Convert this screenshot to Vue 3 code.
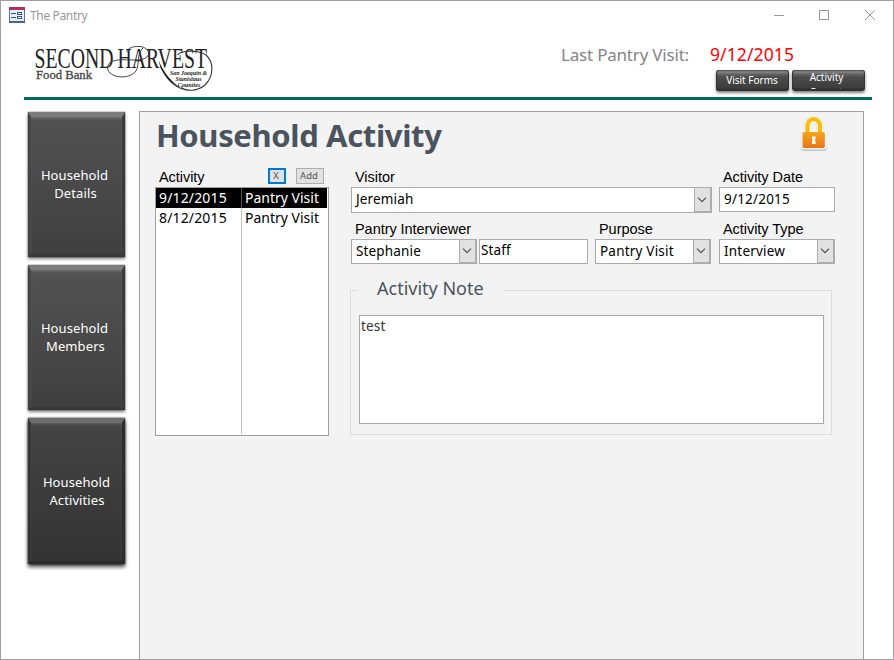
<script setup>
import { ref } from 'vue'

const navItems = [
  { first: 'Household', second: 'Details', tone: 'light' },
  { first: 'Household', second: 'Members', tone: 'light' },
  { first: 'Household', second: 'Activities', tone: 'dark' },
]
const activities = [
  { date: '9/12/2015', type: 'Pantry Visit' },
  { date: '8/12/2015', type: 'Pantry Visit' },
]
const selected = ref(0)
</script>

<template>
  <div class="window">
    <header class="titlebar">
      <svg class="form-icon" width="16" height="16" viewBox="0 0 16 16">
        <rect x="0.5" y="0.5" width="15" height="14.5" fill="#e6ecf8" stroke="#5a70aa" />
        <rect x="0" y="0" width="16" height="3" fill="#b3305c" />
        <path d="M2 6.5H7M2 10.5H7" stroke="#3c569c" />
        <rect x="8.5" y="5.5" width="4" height="2" fill="#fff" stroke="#3c569c" />
        <rect x="8.5" y="9.5" width="4" height="2" fill="#fff" stroke="#3c569c" />
        <path d="M0 15H16" stroke="#2f4688" stroke-width="1.500" />
      </svg>
      <span class="window-title">The Pantry</span>
      <svg class="controls" width="104" height="14" viewBox="0 0 104 14">
        <g fill="none" stroke="#999" stroke-width="1">
          <path d="M1 7.5H11" />
          <rect x="46.5" y="2.5" width="9" height="9" />
          <path d="M92 2L102 12M102 2L92 12" />
        </g>
      </svg>
    </header>

    <div class="banner">
      <svg class="logo" width="182" height="52" viewBox="33 42 182 52">
        <g class="logo-text" fill="#222">
          <text x="34.500" y="67.500" font-size="29" textLength="79" lengthAdjust="spacingAndGlyphs">SECOND</text>
          <text x="117.500" y="67.500" font-size="29" textLength="89.500" lengthAdjust="spacingAndGlyphs">HARVEST</text>
          <text x="36" y="79" font-size="12.500" fill="#444" stroke="#444" stroke-width="0.300" textLength="56" lengthAdjust="spacingAndGlyphs">Food Bank</text>
          <g font-size="6.500" font-style="italic" font-weight="bold">
            <text x="170" y="74.500" textLength="37" lengthAdjust="spacingAndGlyphs">San Joaquin &amp;</text>
            <text x="175.500" y="81" textLength="26" lengthAdjust="spacingAndGlyphs">Stanislaus</text>
            <text x="177.500" y="87" textLength="23" lengthAdjust="spacingAndGlyphs">Counties</text>
          </g>
        </g>
        <g fill="none" stroke="#333" stroke-width="0.900">
          <path d="M127 52C127 47.500 135 46 140 46.500C147 47 151 53 147 57C141 63 123 57.500 113 61C107 63 106 69 110 73C117 79 131 78 136 71C140 65 136 54 143 48" />
          <path d="M181 87.500C187 92 198 91 205 85C214 76 214 62 206 55C198 49.500 181 50.500 177.500 55" stroke-width="1.100" />
        </g>
        <path d="M158.500 60C163 71 171 83 184 90C174 87.500 166 79 160.500 68Z" fill="#222" />
      </svg>
      <div class="visit">
        <div class="visit-line">
          <span class="visit-label">Last Pantry Visit:</span>
          <span class="visit-date">9/12/2015</span>
        </div>
        <div class="visit-actions">
          <button class="dark-button">Visit Forms</button>
          <button class="dark-button two-line">Activity<br />Report</button>
        </div>
      </div>
    </div>

    <div class="body">
      <nav class="sidebar">
        <button v-for="item in navItems" :key="item.second" class="nav-button" :class="item.tone">
          <span>{{ item.first }}</span>
          <span>{{ item.second }}</span>
        </button>
      </nav>

      <main class="panel">
        <div class="panel-head">
          <h1>Household Activity</h1>
          <svg class="lock" width="28" height="36" viewBox="0 0 28 36">
            <defs>
              <linearGradient id="lockFill" x1="0" y1="0" x2="0" y2="1">
                <stop offset="0" stop-color="#f6a51c" />
                <stop offset="1" stop-color="#e8761a" />
              </linearGradient>
            </defs>
            <path d="M7.500 18V10.500A6.200 7 0 0 1 19.900 10.500V18" fill="none" stroke="#d8d8d8" stroke-width="7.500" />
            <rect x="0.800" y="15" width="26" height="20" rx="3" fill="#c4c4c4" />
            <rect x="0.800" y="14" width="26" height="19.500" rx="3" fill="#f6f6f6" />
            <path d="M7.500 18V10.500A6.200 7 0 0 1 19.900 10.500V18" fill="none" stroke="#fafafa" stroke-width="6.500" />
            <path d="M7.500 18V10A6.200 6.800 0 0 1 19.900 10V18" fill="none" stroke="#f6bd0b" stroke-width="4.200" />
            <rect x="2.500" y="16" width="22.300" height="16" rx="1.500" fill="url(#lockFill)" />
            <path d="M12 20.500H15.500V23L14.800 24L15.500 25V28H12V25L12.700 24L12 23Z" fill="#fff" />
          </svg>
        </div>

        <div class="columns">
          <section class="history">
            <div class="history-head">
              <span class="label">Activity</span>
              <button class="mini focused">X</button>
              <button class="mini add">Add</button>
            </div>
            <div class="list">
              <div
                v-for="(row, i) in activities"
                :key="row.date"
                class="list-row"
                :class="{ selected: i === selected }"
                @click="selected = i"
              >
                <span class="cell">{{ row.date }}</span>
                <span class="cell">{{ row.type }}</span>
              </div>
              <div class="list-rest"><span></span></div>
            </div>
          </section>

          <section class="form">
            <div class="form-row first">
              <div class="field visitor">
                <span class="label">Visitor</span>
                <div class="input tall"><span>Jeremiah</span><i class="drop"><svg width="10" height="6" viewBox="0 0 10 6"><path d="M1 0.700L5 4.700L9 0.700" /></svg></i></div>
              </div>
              <div class="field std">
                <span class="label">Activity Date</span>
                <div class="input"><span>9/12/2015</span></div>
              </div>
            </div>
            <div class="form-row">
              <div class="field interviewer">
                <span class="label">Pantry Interviewer</span>
                <div class="pair">
                  <div class="input person"><span>Stephanie</span><i class="drop"><svg width="10" height="6" viewBox="0 0 10 6"><path d="M1 0.700L5 4.700L9 0.700" /></svg></i></div>
                  <div class="input staff"><span>Staff</span></div>
                </div>
              </div>
              <div class="field std purpose">
                <span class="label">Purpose</span>
                <div class="input"><span>Pantry Visit</span><i class="drop"><svg width="10" height="6" viewBox="0 0 10 6"><path d="M1 0.700L5 4.700L9 0.700" /></svg></i></div>
              </div>
              <div class="field std">
                <span class="label">Activity Type</span>
                <div class="input"><span>Interview</span><i class="drop"><svg width="10" height="6" viewBox="0 0 10 6"><path d="M1 0.700L5 4.700L9 0.700" /></svg></i></div>
              </div>
            </div>
            <fieldset class="note">
              <legend><span>Activity Note</span></legend>
              <div class="note-text">test</div>
            </fieldset>
          </section>
        </div>
      </main>
    </div>
  </div>
</template>

<style>
body { margin: 0; overflow: hidden; }
</style>

<style scoped>
* { box-sizing: border-box; }
button { font-family: inherit; padding: 0; margin: 0; }
.window {
  width: 894px; height: 660px; overflow: hidden;
  display: flex; flex-direction: column;
  border: 1px solid #a0a0a0; background: #fff;
  font-family: "Noto Sans", "Open Sans", sans-serif;
}
.titlebar { height: 29px; flex: none; display: flex; align-items: center; padding: 0 16px 0 8px; }
.window-title { margin-left: 5px; font-size: 12px; line-height: 28px; color: #999; letter-spacing: -0.35px; }
.controls { margin-left: auto; margin-top: -2px; }
.form-icon { margin-top: -1px; }
.banner {
  height: 70px; flex: none; margin: 0 21px 0 23px;
  display: flex; justify-content: space-between;
  border-bottom: 3px solid #006a60;
}
.logo { margin: 12px 0 0 9px; overflow: visible; }
.logo-text { font-family: "Liberation Serif", serif; }
.visit { width: 311px; display: flex; flex-direction: column; }
.visit-line { height: 40px; padding-top: 12px; display: flex; line-height: 25px; }
.visit-label { width: 149px; font-size: 17px; color: #858585; letter-spacing: -0.2px; white-space: nowrap; }
.visit-date { font-size: 17.500px; color: #f00; letter-spacing: 0.1px; }
.visit-actions { display: flex; gap: 3px; margin-left: 155px; }
.dark-button {
  width: 73px; height: 21px; overflow: hidden; border: 0; border-radius: 3px; color: #fff;
  font-size: 10px; line-height: 19px; padding: 0 1px 1px 0;
  background: linear-gradient(#555 0, #858585 2px, #666 4px, #4c4c4c 7px, #3d3d3d 18px, #2b2b2b);
  box-shadow: 0 2px 3px rgba(0, 0, 0, 0.5), inset 1px 0 1px #333, inset -1px 0 1px #333;
}
.two-line { line-height: 15px; padding: 0 4px 0 0; display: block; border-bottom: 2px solid #303030; }
.body { flex: 1; display: flex; padding: 11px 29px 0 27px; min-height: 0; }
.sidebar { width: 97px; display: flex; flex-direction: column; gap: 8px; padding-top: 1px; }
.nav-button {
  height: 145px; flex: none; border: 3px solid; border-top-width: 5px; display: flex; flex-direction: column;
  align-items: center; justify-content: center; color: #fff; padding-bottom: 4px;
  font-size: 13px; line-height: 18px; letter-spacing: 0.1px;
  box-shadow: 0 2px 3px rgba(0, 0, 0, 0.5), 0 0 1px #222, inset 0 2px 3px -1px #777;
}
.nav-button span:first-child { margin-left: -4px; }
.nav-button span:last-child { margin-left: -2px; }
.light { background: linear-gradient(#535353, #3f3f3f) border-box; border-color: #7c7c7c #3a3a3a #383838 #444; }
.dark { background: linear-gradient(#454545, #323232) border-box; border-color: #6c6c6c #2c2c2c #2a2a2a #363636; height: 146px; padding-bottom: 2px; box-shadow: 0 3px 4px rgba(0, 0, 0, 0.7), 0 0 2px #222, inset 0 2px 3px -1px #666; }
.nav-button.dark span:first-child { margin-left: 0; }
.nav-button.dark span:last-child { margin-left: 1px; }
.panel {
  width: 725px; margin-left: 14px; padding: 0 28px 0 15px;
  border: 1px solid #a0a0a0; border-bottom: 0; background: #f3f3f3;
}
.panel-head { height: 55px; display: flex; justify-content: space-between; padding: 0 7px 0 1px; }
h1 { margin: 0; font-size: 31px; line-height: 47px; font-weight: 700; color: #4b535f; letter-spacing: -0.36px; white-space: nowrap; }
.lock { margin-top: 4px; }
.columns { display: flex; gap: 22px; }
.history { width: 174px; flex: none; }
.label {
  font-family: "Liberation Sans", Arial, sans-serif; font-size: 14.500px; line-height: 20px;
  color: #000; white-space: nowrap; padding-left: 4px; display: block; letter-spacing: -0.05px;
}
.history-head { display: flex; height: 20px; }
.history-head .label { width: 113px; }
.mini {
  width: 18px; height: 16px; margin-top: 1px; border: 1px solid #adadad; background: #e1e1e1;
  font-size: 9.500px; line-height: 12px; color: #555; padding-right: 2px;
}
.focused { border: 2px solid #0078d7; }
.add { width: 28px; margin-left: 10px; line-height: 14px; }
.list {
  height: 249px; border: 1px solid #a0a0a0; background: #fff;
  display: flex; flex-direction: column; font-size: 14px; line-height: 20px;
  padding: 0 1px 1px 0;
}
.list-row { display: flex; height: 20px; }
.cell { width: 86px; padding-left: 3px; border-right: 1px solid #c0c0c0; white-space: nowrap; letter-spacing: 0.15px; }
.cell:last-child { border-right: 0; width: 85px; letter-spacing: 0; }
.selected { background: #000; color: #fff; }
.selected .cell { border-color: #555; }
.list-rest { flex: 1; display: flex; }
.list-rest span { width: 86px; border-right: 1px solid #c0c0c0; }
.form { width: 484px; flex: none; }
.form-row { display: flex; height: 45px; }
.form-row.first { height: 52px; }
.visitor { width: 361px; margin-right: 7px; }
.std { width: 116px; }
.interviewer { width: 237px; margin-right: 7px; }
.purpose { margin-right: 8px; }
.pair { display: flex; gap: 2px; }
.person { width: 126px; }
.staff { width: 109px; }
.input {
  height: 25px; border: 1px solid #ababaf; background: #fff; padding-left: 4px;
  display: flex; justify-content: space-between; font-size: 13.500px; line-height: 22px;
  color: #000; white-space: nowrap; letter-spacing: 0.15px;
}
.std .input { letter-spacing: 0.2px; }
.tall { height: 26px; line-height: 23px; }
.staff { padding-left: 1px; line-height: 20px; }
.drop {
  width: 17px; display: flex; align-items: center; justify-content: center;
  background: #e1e1e1; border: 1px solid #adadad; border-top-width: 0; padding-right: 1px;
}
.drop path { fill: none; stroke: #505050; stroke-width: 1.200; }
.note {
  height: 157px; width: 482px; margin: 14px 0 0 -1px; padding: 0 7px 10px 8px;
  border: 1px solid #dcdcdc; min-width: 0; display: flow-root;
}
legend { margin-left: -1px; padding: 0 20px 0 19px; font-size: 18px; line-height: 24px; color: #4b535f; white-space: nowrap; }
legend span { display: block; margin: -2px 0 2px; }
.note-text { height: 109px; margin-top: 13px; border: 1px solid #a8a8a8; background: #fff; padding: 0 1px; font-size: 13.500px; line-height: 21px; color: #333; letter-spacing: 0.15px; }
</style>
